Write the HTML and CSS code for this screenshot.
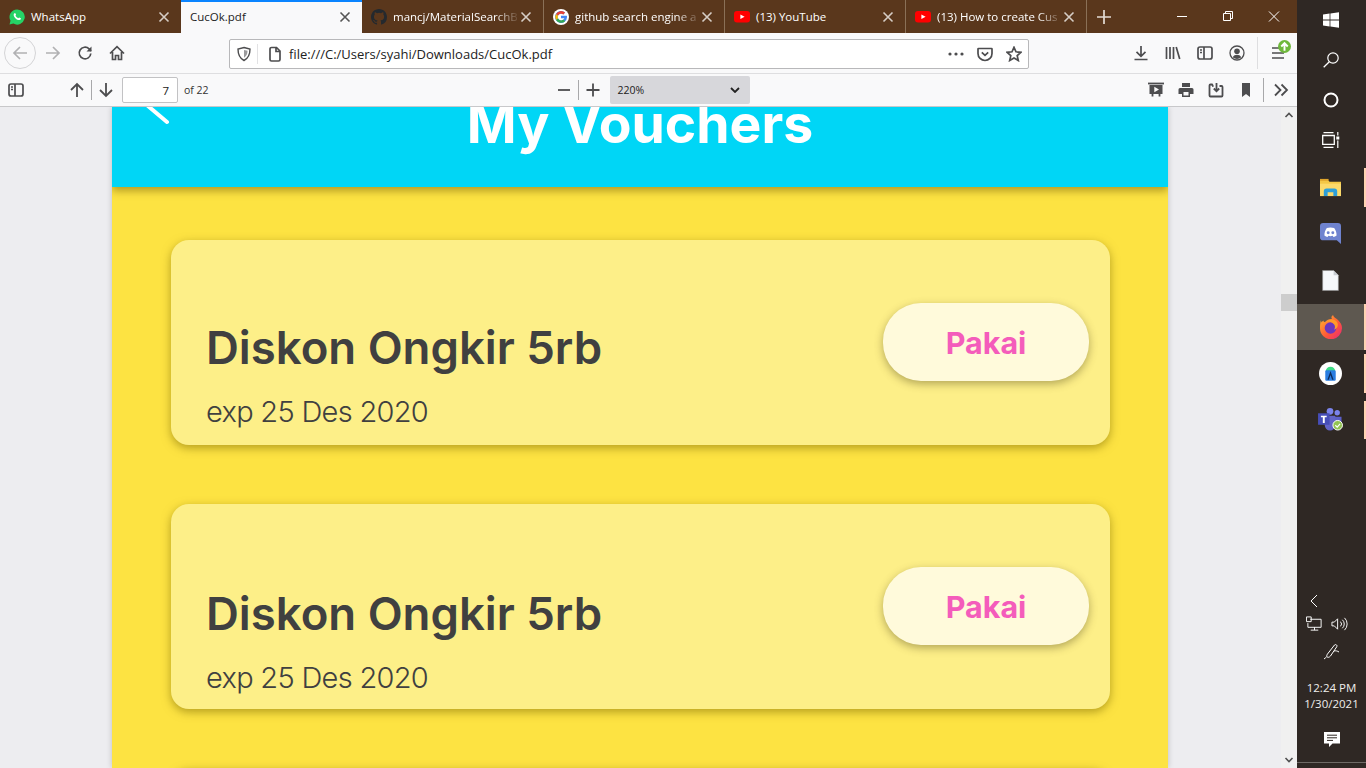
FILE: index.html
```html
<!DOCTYPE html>
<html lang="en">

<head>
    <meta charset="UTF-8" />
    <title>CucOk.pdf</title>
    <link rel="stylesheet" href="styles.css">
</head>

<body>
    <svg class="defs" aria-hidden="true">
        <symbol id="i-x" viewBox="0 0 12 12"><path d="M1.5 1.5l9 9M10.5 1.5l-9 9" /></symbol>
        <symbol id="i-yt" viewBox="0 0 16 12"><rect width="16" height="11.4" rx="3" fill="#f00" /><path d="M6.4 3.4l4.2 2.3-4.2 2.3z" fill="#fff" /></symbol>
    </svg>

    <div class="browser">
        <!-- tab strip -->
        <div class="tabstrip">
            <div class="tab">
                <svg class="favicon" viewBox="0 0 16 16"><path d="M8 .4a7.6 7.6 0 0 0-6.5 11.4L.5 15.6l3.9-1A7.6 7.6 0 1 0 8 .4z" fill="#25d366" /><path d="M5.6 4.2c-.3 0-.8.4-.9 1.200-.2 1.300.7 2.800 1.900 4 1.300 1.200 2.800 1.900 4 1.600.9-.2 1.300-.9 1.300-1.500l-.1-.3-1.700-.8-.8.9c-1-.3-2.300-1.500-2.800-2.700l.6-.8-.7-1.600z" fill="#fff" /></svg>
                <span class="tab-title plain">WhatsApp</span>
                <svg class="tab-x"><use href="#i-x" /></svg>
            </div>
            <div class="tab active">
                <span class="tab-title plain">CucOk.pdf</span>
                <svg class="tab-x"><use href="#i-x" /></svg>
            </div>
            <div class="tab">
                <svg class="favicon" viewBox="0 0 16 16"><path fill="#24292e" d="M8 0C3.580 0 0 3.580 0 8c0 3.540 2.290 6.530 5.470 7.590.4.070.55-.17.55-.38v-1.490c-2.010.37-2.530-.49-2.690-.94-.09-.23-.48-.94-.82-1.130-.28-.15-.68-.52-.01-.53.63-.01 1.080.58 1.230.82.72 1.210 1.870.87 2.330.66.070-.52.28-.87.51-1.070-1.780-.2-3.640-.89-3.640-3.950 0-.87.31-1.590.82-2.150-.08-.2-.36-1.020.08-2.120 0 0 .67-.21 2.200.82a7.400 7.400 0 0 1 4 0c1.530-1.040 2.200-.82 2.200-.82.44 1.100.16 1.920.08 2.120.51.56.82 1.270.82 2.150 0 3.070-1.870 3.750-3.650 3.950.29.25.54.73.54 1.480v2.190c0 .21.15.46.55.38A8 8 0 0 0 16 8c0-4.420-3.580-8-8-8z" /></svg>
                <span class="tab-title">mancj/MaterialSearchB</span>
                <svg class="tab-x"><use href="#i-x" /></svg>
            </div>
            <div class="tab sep">
                <svg class="favicon" viewBox="0 0 16 16"><circle cx="8" cy="8" r="8" fill="#fff" /><path d="M8 6.800v2.500h3.400A3.500 3.500 0 1 1 10.300 5.400l1.800-1.800A6 6 0 1 0 14 8.200c0-.5 0-1-.1-1.400z" fill="#4285f4" /><path d="M3 5l2 1.700A3.500 3.500 0 0 1 10.300 5.400l1.800-1.800A6 6 0 0 0 3 5z" fill="#ea4335" /><path d="M3 11l2-1.700a3.500 3.500 0 0 0 5.400 1.300l1.800 1.600A6 6 0 0 1 3 11z" fill="#34a853" /><path d="M3 5l2 1.700a3.500 3.500 0 0 0 0 2.600L3 11a6 6 0 0 1 0-6z" fill="#fbbc05" /></svg>
                <span class="tab-title">github search engine a</span>
                <svg class="tab-x"><use href="#i-x" /></svg>
            </div>
            <div class="tab sep">
                <svg class="favicon"><use href="#i-yt" /></svg>
                <span class="tab-title plain">(13) YouTube</span>
                <svg class="tab-x"><use href="#i-x" /></svg>
            </div>
            <div class="tab sep">
                <svg class="favicon"><use href="#i-yt" /></svg>
                <span class="tab-title">(13) How to create Cus</span>
                <svg class="tab-x"><use href="#i-x" /></svg>
            </div>
            <div class="new-tab sep">
                <svg viewBox="0 0 14 14"><path d="M7 0v14M0 7h14" /></svg>
            </div>
            <div class="win-controls">
                <svg viewBox="0 0 46 33"><path d="M18 16.500h10" /></svg>
                <svg viewBox="0 0 46 33"><path d="M18.500 13.500h7v7h-7zM20.500 13.500v-2h7v7h-2" /></svg>
                <svg viewBox="0 0 46 33"><path d="M18 11.500l10 10M28 11.500l-10 10" /></svg>
            </div>
        </div>

        <!-- navigation bar -->
        <div class="navbar">
            <div class="back-btn">
                <svg class="ico-s faint" viewBox="0 0 16 16"><path d="M15 8H2M8 2L2 8l6 6" /></svg>
            </div>
            <button class="tool"><svg class="ico-s faint" viewBox="0 0 16 16"><path d="M1 8h13M8 2l6 6-6 6" /></svg></button>
            <button class="tool"><svg class="ico-s" viewBox="0 0 16 16"><path d="M13.800 8.500a5.800 5.800 0 1 1-1.700-4.600L14 6" /><path class="fill" d="M14.500 1.500v5h-5z" /></svg></button>
            <button class="tool"><svg class="ico-s" viewBox="0 0 16 16"><path d="M1 8.500L8 1.700l7 6.800M3.500 7v7.500h3v-4h3v4h3V7" /></svg></button>
            <div class="urlbar">
                <svg class="ico-s shield" viewBox="0 0 16 16"><path d="M8 1.500l6 1.500c0 5-1 9-6 11.500C3 12 2 8 2 3z" /><path class="shield-half" d="M8 4l3.500.8C11.400 8 10.700 10 8 11.700z" /></svg>
                <span class="url-sep"></span>
                <svg class="ico-s page-ico" viewBox="0 0 16 16"><path d="M3 3a1.500 1.500 0 0 1 1.500-1.500h5L13 5v8.500a1.500 1.500 0 0 1-1.500 1.500h-7A1.500 1.500 0 0 1 3 13.500zM9 1.500v4h4" /></svg>
                <span class="url-text">file:///C:/Users/syahi/Downloads/CucOk.pdf</span>
                <svg class="ico-s dots" viewBox="0 0 16 16"><circle class="fill" cx="2" cy="8" r="1.600" /><circle class="fill" cx="8" cy="8" r="1.600" /><circle class="fill" cx="14" cy="8" r="1.600" /></svg>
                <svg class="ico-s pocket" viewBox="0 0 16 16"><path d="M1.500 2.500h13a.5.5 0 0 1 .5.500v4.500a7 7 0 0 1-14 0V3a.5.5 0 0 1 .5-.5z" /><path d="M4.800 6.300L8 9.400l3.200-3.100" /></svg>
                <svg class="ico-s star" viewBox="0 0 16 16"><path d="M8 1.300l2 4.500 4.900.5-3.700 3.300 1.100 4.900L8 12l-4.300 2.500 1.100-4.900L1.100 6.300 6 5.800z" /></svg>
            </div>
            <button class="tool dl"><svg class="ico-s" viewBox="0 0 16 16"><path d="M8 1v10M3.500 6.800L8 11.300l4.500-4.500M1.500 14.500h13" /></svg></button>
            <button class="tool"><svg class="ico-s" viewBox="0 0 16 16"><path d="M1.500 2v12M5 2v12M8.500 2v12M11.200 2l3.500 12" /></svg></button>
            <button class="tool"><svg class="ico-s" viewBox="0 0 16 16"><rect x="1" y="2" width="14" height="12" rx="2" /><path d="M7 2v12M3 5h2M3 7.500h2" /></svg></button>
            <button class="tool"><svg class="ico-s account" viewBox="0 0 16 16"><circle cx="8" cy="8" r="7" /><circle class="fill" cx="8" cy="6.300" r="2.800" /><path class="fill" d="M3.800 12.300c1-1.800 2.400-2.500 4.200-2.500s3.200.7 4.200 2.500C11 13.600 9.500 14 8 14s-3-.4-4.200-1.700z" /></svg></button>
            <span class="nav-sep"></span>
            <button class="tool menu">
                <svg class="ico-s" viewBox="0 0 16 16"><path d="M2 3h12M2 8h12M2 13h12" /></svg>
                <svg class="badge" viewBox="0 0 12 12"><circle cx="6" cy="6" r="6" fill="#6fb83c" /><path d="M6 10V3.500M3 6l3-3 3 3" stroke="#fff" stroke-width="1.800" fill="none" /></svg>
            </button>
        </div>

        <!-- pdf toolbar -->
        <div class="pdfbar">
            <svg class="ico-s side-ico" viewBox="0 0 16 16"><rect x="1" y="2" width="14" height="12" rx="2" /><path d="M7 2v12M3 5h2M3 7.500h2" /></svg>
            <svg class="ico-m up-ico" viewBox="0 0 16 16"><path d="M8 15V2M2 8l6-6 6 6" /></svg>
            <span class="pdf-sep"></span>
            <svg class="ico-m" viewBox="0 0 16 16"><path d="M8 1v13M2 8l6 6 6-6" /></svg>
            <input class="page-input" value="7" aria-label="Page">
            <span class="page-count">of 22</span>
            <svg class="ico-m minus-ico" viewBox="0 0 16 16"><path d="M2 8h12" /></svg>
            <span class="pdf-sep"></span>
            <svg class="ico-m" viewBox="0 0 16 16"><path d="M1.500 8h13M8 1.500v13" /></svg>
            <div class="zoom-select">
                <span>220%</span>
                <svg viewBox="0 0 10 6"><path d="M1 1l4 4 4-4" /></svg>
            </div>
            <svg class="ico-m present-ico" viewBox="0 0 16 16"><path d="M0 1.500h16" /><path class="fill" d="M1.500 3h13v9h-13zM6.300 4.800v5.400L11 7.500z" fill-rule="evenodd" /><path d="M4.500 12v2.500M11.500 12v2.500" /></svg>
            <svg class="ico-m gap-30" viewBox="0 0 16 16"><path class="fill" d="M4 1h8v4H4zM2 6h12a1.500 1.500 0 0 1 1.500 1.500V12H12v3H4v-3H.5V7.500A1.500 1.500 0 0 1 2 6zm3.500 4v3.500h5V10z" fill-rule="evenodd" /></svg>
            <svg class="ico-m gap-30" viewBox="0 0 16 16"><path d="M5.500 4H5L4 2.500H2.500a1 1 0 0 0-1 1v10a1 1 0 0 0 1 1h11a1 1 0 0 0 1-1V5a1 1 0 0 0-1-1h-2M8.500 1v8M5.800 6.500l2.700 2.700 2.700-2.700" /></svg>
            <svg class="ico-m gap-30" viewBox="0 0 16 16"><path class="fill" d="M4 1h8v14l-4-3-4 3z" /></svg>
            <span class="pdf-sep end-sep"></span>
            <svg class="ico-m more-ico" viewBox="0 0 16 16"><path d="M2 2.500L7.500 8 2 13.500M8.500 2.500L14 8l-5.500 5.500" /></svg>
        </div>

        <!-- document viewer -->
        <div class="viewer">
            <div class="doc-area">
                <main class="doc-page">
                    <header class="doc-header">
                        <svg class="back-arrow" viewBox="0 0 24 18"><path d="M2-1l19 16" /></svg>
                        <h1>My Vouchers</h1>
                    </header>
                    <section class="voucher-list">
                        <article class="voucher">
                            <div class="voucher-info">
                                <h2>Diskon Ongkir 5rb</h2>
                                <p>exp 25 Des 2020</p>
                            </div>
                            <button class="use-btn">Pakai</button>
                        </article>
                        <article class="voucher">
                            <div class="voucher-info">
                                <h2>Diskon Ongkir 5rb</h2>
                                <p>exp 25 Des 2020</p>
                            </div>
                            <button class="use-btn">Pakai</button>
                        </article>
                        <article class="voucher"></article>
                    </section>
                </main>
            </div>
            <div class="scrollbar">
                <svg viewBox="0 0 16 16"><path d="M4.500 10L8 6.500l3.500 3.500" /></svg>
                <div class="thumb"></div>
                <svg viewBox="0 0 16 16"><path d="M4.500 6L8 9.500 11.500 6" /></svg>
            </div>
        </div>
    </div>

    <!-- windows taskbar -->
    <aside class="taskbar">
        <div class="task first">
            <svg viewBox="0 0 16 16"><path d="M0 2.400l6.600-.9v6.100H0zM7.400 1.400L16 .2v7.400H7.400zM0 8.400h6.600v6.100L0 13.600zM7.400 8.400H16v7.400l-8.600-1.200z" fill="#fff" /></svg>
        </div>
        <div class="task">
            <svg viewBox="0 0 16 16"><circle cx="10" cy="6" r="5.200" fill="none" stroke="#fff" stroke-width="1.200" /><path d="M6.300 9.700L.7 15.300" stroke="#fff" stroke-width="1.300" /></svg>
        </div>
        <div class="task">
            <svg viewBox="0 0 16 16"><circle cx="8" cy="8" r="6.500" fill="none" stroke="#fff" stroke-width="2" /></svg>
        </div>
        <div class="task">
            <svg class="taskview" viewBox="0 0 18 16"><path d="M1.500.7h10M1.500 15.300h10M.7 3.500h11.600v8.800H.7z" fill="none" stroke="#fff" stroke-width="1.300" /><path d="M15.800 0v3.500M15.800 8.500V16" stroke="#fff" stroke-width="1.200" /><rect x="14.300" y="4.500" width="3" height="3" fill="#fff" /></svg>
        </div>
        <div class="task running wide">
            <svg class="app" viewBox="0 0 22 18"><path d="M0 1h8l2 2h12v15H0z" fill="#f3c746" /><path d="M0 0h9v2H0z" fill="#e0a52c" /><path d="M0 5h22v13H0z" fill="#fbd96a" /><path d="M4 18v-5a3 3 0 0 1 3-3h8a3 3 0 0 1 3 3v5h-4v-4H8v4z" fill="#2d9fd8" /></svg>
        </div>
        <div class="task">
            <svg class="app" viewBox="0 0 20 20"><path d="M3 0h14a3 3 0 0 1 3 3v17l-4-3.500H3a3 3 0 0 1-3-3V3a3 3 0 0 1 3-3z" fill="#6f83cf" /><path d="M6.500 4.800c2.200-.8 4.800-.8 7 0 1.600 2 2.300 4.500 2.300 7.200-1 .8-2 1.200-3 1.400l-.7-1.200c-2 .5-2.200.5-4.200 0l-.7 1.200c-1-.2-2-.6-3-1.400 0-2.700.7-5.200 2.300-7.200z" fill="#fff" /><circle cx="7.800" cy="9.200" r="1.400" fill="#6f83cf" /><circle cx="12.200" cy="9.200" r="1.400" fill="#6f83cf" /></svg>
        </div>
        <div class="task">
            <svg class="app" viewBox="0 0 16 20"><path d="M.5.500h10.500l4.500 4.500v14.500H.5z" fill="#f6f8fb" stroke="#8d8d8d" stroke-width=".6" /><path d="M11 .500V5h4.500z" fill="#c8ccd2" /></svg>
        </div>
        <div class="task running active">
            <svg class="app ff" viewBox="0 0 24 24"><defs><linearGradient id="ff" x1="0" y1="0" x2="1" y2="1"><stop offset="0" stop-color="#ffbd2e" /><stop offset=".55" stop-color="#ff5a36" /><stop offset="1" stop-color="#e8257c" /></linearGradient></defs><path d="M2 5c0 1 .3 2 .8 2.500C3 6.500 3.800 6 4.500 5.500c0 1 .6 1.500 1.500 1.600C8 4.500 11 3.600 13 4c-.9-1-.9-2.500 1-4 .5 2.500 3 3 5 5 2.500 2.500 4 5 4 8a11 11 0 0 1-22 .5C1 10 1.200 7 2 5z" fill="url(#ff)" /><circle cx="11.500" cy="13" r="5.800" fill="#6b37bf" /><path d="M7 7c3-1 7 0 8.500 3 .8 1.700.5 3.500-.5 4.800 3-1 4.500-3.600 3.500-6.800C17 4 11 3 7 7z" fill="#ff9a2a" /></svg>
        </div>
        <div class="task running">
            <svg class="app as" viewBox="0 0 22 22"><circle cx="11" cy="11" r="11" fill="#fff" /><path d="M6.500 9a4.500 4.500 0 0 1 9 0z" fill="#3ddc84" /><rect x="6" y="8" width="10" height="10" rx="1" fill="#2a7de1" /><path d="M11 8.500l-3 8.500h1.400l1.600-4.500 1.600 4.500H14z" fill="#0d2d5e" /></svg>
        </div>
        <div class="task running">
            <svg class="app teams" viewBox="0 0 26 24"><circle cx="20" cy="5" r="2.800" fill="#7b83eb" /><path d="M16 9h8.500v6a4.500 4.500 0 0 1-8.500 2z" fill="#5b5fc7" /><circle cx="12.500" cy="3.500" r="3.500" fill="#7b83eb" /><path d="M7 8h11v10a5.500 5.500 0 0 1-11 0z" fill="#6264c7" /><rect y="5.500" width="12" height="12" fill="#464eb8" /><path d="M3 8h6v1.700H7v6H5v-6H3z" fill="#fff" /><circle cx="20.500" cy="18" r="5" fill="#92c353" stroke="#fff" /><path d="M18 18l2 2 3-3.500" fill="none" stroke="#fff" stroke-width="1.200" /></svg>
        </div>

        <div class="tray">
            <svg class="tray-chevron" viewBox="0 0 10 14"><path d="M8 1L2 7l6 6" /></svg>
            <div class="tray-row">
                <svg viewBox="0 0 18 16"><path d="M4.500 3H16v8.500H2V7M9 11.500v3M5 14.500h8" /><path d="M.5.500h5v5h-5z" /></svg>
                <svg viewBox="0 0 18 16"><path d="M1 6h2.500L7 2.500v11L3.500 10H1zM10 5.500a3.500 3.500 0 0 1 0 5M12 3.500a6 6 0 0 1 0 9M14.300 1.500a9 9 0 0 1 0 13" /></svg>
            </div>
            <svg class="tray-pen" viewBox="0 0 18 18"><path d="M4.500 11L11.500 2c1-1.200 3.200.3 2.300 1.700L7.500 13c-1 1.300-2.700 1.700-3.400 1-.6-.6-.4-2 .4-3zM1 16c1-1 1.500-1 2.500-2M11 8c1.500-.5 3.500 0 5 1" /></svg>
            <div class="clock">
                <span>12:24 PM</span>
                <span>1/30/2021</span>
            </div>
            <svg class="tray-note" viewBox="0 0 16 16"><path d="M0 0h16v11.500H8.500L5 15v-3.500H0z" fill="#fff" /><path d="M3 3.200h10M3 5.800h10M3 8.400h6" stroke="#2f2823" stroke-width="1" /></svg>
        </div>
        <div class="show-desktop"></div>
    </aside>
</body>

</html>
```

FILE: styles.css
```css
* {
    box-sizing: border-box;
}

:root {
    --brown: #5a371c;
    --toolbar: #f9f9fa;
    --icon: #4d4d4f;
    --taskbar: #2f2824;
}

html,
body {
    height: 100%;
}

body {
    margin: 0;
    display: flex;
    overflow: hidden;
    font-family: "Open Sans", "Noto Sans", sans-serif;
    background: var(--taskbar);
}

.defs {
    display: none;
}

button {
    all: unset;
}

/* Browser window */
.browser {
    width: 1297px;
    height: 768px;
    display: flex;
    flex-direction: column;
    flex: none;
}

/* Tabs */
.tabstrip {
    height: 33px;
    display: flex;
    flex: none;
    background: var(--brown);
    color: #fff;
}

.tab {
    width: 181px;
    display: flex;
    align-items: center;
    padding: 0 9px;
    font-size: 11.500px;
    position: relative;
}

.tab.sep,
.new-tab.sep {
    border-left: 1px solid #8a7057;
}

.tab.active {
    background: var(--toolbar);
    color: #222;
    border-top: 2px solid #0a84ff;
    padding-bottom: 2px;
}

.favicon {
    width: 16px;
    height: 16px;
    flex: none;
    margin-right: 6px;
}

.tab-title {
    flex: 1;
    white-space: nowrap;
    -webkit-mask-image: linear-gradient(to right, #000 80%, transparent);
    mask-image: linear-gradient(to right, #000 80%, transparent);
}

.tab-title.plain {
    -webkit-mask-image: none;
    mask-image: none;
}

.tab-x {
    width: 12px;
    height: 12px;
    flex: none;
    margin: 0 2px 0 0;
    fill: none;
    stroke: #d6cdc5;
    stroke-width: 1.600;
}

.tab.active .tab-x {
    stroke: #555;
}

.new-tab {
    width: 35px;
    display: flex;
    align-items: center;
    justify-content: center;
}

.new-tab svg {
    width: 14px;
    height: 14px;
    fill: none;
    stroke: #e4dcd4;
    stroke-width: 1.700;
}

.win-controls {
    margin-left: auto;
    display: flex;
}

.win-controls svg {
    width: 46px;
    height: 33px;
    fill: none;
    stroke: #fff;
    stroke-width: 1;
}

/* Icon helpers */
.ico-s,
.ico-m {
    width: 16px;
    height: 16px;
    flex: none;
    fill: none;
    stroke: var(--icon);
    stroke-width: 1.700;
}

.ico-m {
    stroke-width: 1.800;
}

.fill {
    fill: var(--icon);
    stroke: none;
}

.faint {
    stroke: #b1b1b3;
}

/* Nav bar */
.navbar {
    height: 41px;
    flex: none;
    display: flex;
    align-items: center;
    padding-left: 4px;
    background: var(--toolbar);
    border-bottom: 1px solid #dedee0;
}

.back-btn {
    width: 32px;
    height: 32px;
    margin-right: 1px;
    border: 1px solid #d4d4d6;
    border-radius: 50%;
    display: flex;
    align-items: center;
    justify-content: center;
}

.tool {
    width: 32px;
    height: 32px;
    display: flex;
    align-items: center;
    justify-content: center;
    flex: none;
    position: relative;
}

.urlbar {
    width: 800px;
    height: 30px;
    margin-left: 96px;
    margin-top: 1px;
    background: #fff;
    border: 1px solid #b8b8ba;
    border-radius: 2px;
    display: flex;
    align-items: center;
    padding-left: 5px;
    flex: none;
}

.shield {
    margin: 0 0 0 1px;
    stroke-width: 1.400;
}

.shield-half {
    fill: #9a9a9c;
    stroke: none;
}

.url-sep {
    width: 1px;
    height: 20px;
    margin: 0 5px;
    background: #e2e2e4;
}

.page-ico {
    margin: 0 0 0 4px;
}

.url-text {
    margin-left: 6px;
    font-size: 13px;
    color: #222;
    flex: 1;
    white-space: nowrap;
}

.dots {
    stroke: none;
}

.pocket,
.star {
    margin-left: 13px;
}

.star {
    margin-right: 6px;
}

.dl {
    margin-left: 96px;
}

.account {
    stroke-width: 1.300;
}

.nav-sep {
    width: 1px;
    height: 32px;
    margin: 0 4px;
    background: #dedee0;
}

.menu .badge {
    position: absolute;
    top: 3px;
    right: 3px;
    width: 13px;
    height: 13px;
}

/* PDF toolbar */
.pdfbar {
    height: 33px;
    flex: none;
    display: flex;
    align-items: center;
    background: var(--toolbar);
    border-bottom: 1px solid #c8c8ca;
    padding-left: 8px;
}

.side-ico {
    margin-right: 45px;
}

.pdf-sep {
    width: 1px;
    height: 20px;
    margin: 0 6px;
    background: #a8a8aa;
}

.page-input {
    width: 56px;
    height: 26px;
    margin-left: 8px;
    padding: 0 8px;
    border: 1px solid #c2c2c4;
    border-radius: 2px;
    font: 11.500px "Open Sans", sans-serif;
    color: #222;
    text-align: right;
    background: #fff;
}

.page-count {
    margin-left: 6px;
    font-size: 10.500px;
    color: #333;
}

.minus-ico {
    margin-left: 347px;
}

.zoom-select {
    width: 140px;
    height: 28px;
    margin-left: 9px;
    padding: 0 10px 0 8px;
    border-radius: 2px;
    background: #d7d7db;
    display: flex;
    align-items: center;
    justify-content: space-between;
    font-size: 10.500px;
    color: #222;
}

.zoom-select svg {
    width: 10px;
    height: 6px;
    fill: none;
    stroke: #222;
    stroke-width: 1.800;
}

.present-ico {
    margin-left: 398px;
}

.gap-30 {
    margin-left: 14px;
}

.end-sep {
    height: 24px;
    margin: 0 9px;
}

/* Viewer */
.viewer {
    flex: 1;
    min-height: 0;
    display: flex;
}

.doc-area {
    flex: 1;
    overflow: hidden;
    padding-left: 112px;
    background: #ededf0;
}

.doc-page {
    width: 1056px;
    height: 100%;
    overflow: hidden;
    background: #fde342;
    box-shadow: 0 0 6px rgba(0, 0, 0, .2);
    font-family: Inter, "Liberation Sans", sans-serif;
}

.doc-header {
    position: relative;
    height: 80px;
    overflow: hidden;
    background: #00d6f6;
    display: flex;
    justify-content: center;
    align-items: flex-end;
    box-shadow: 0 4px 8px rgba(90, 70, 0, .45);
}

.doc-header h1 {
    margin: 0 0 37px 0;
    font-size: 53.500px;
    line-height: 1;
    font-weight: 700;
    color: #fff;
}

.back-arrow {
    position: absolute;
    left: 32px;
    top: 0;
    width: 28px;
    height: 18px;
    fill: none;
    stroke: #fff;
    stroke-width: 4;
    stroke-linecap: round;
}

.voucher-list {
    display: flex;
    flex-direction: column;
    gap: 59px;
    padding: 53px 58px 0 59px;
}

.voucher {
    height: 205px;
    flex: none;
    display: flex;
    align-items: center;
    justify-content: space-between;
    padding: 0 21px 0 35px;
    background: #fdef88;
    border-radius: 18px;
    box-shadow: 0 3px 10px rgba(120, 100, 0, .55);
}

.voucher-info {
    align-self: flex-end;
    padding-bottom: 15px;
    color: #404040;
}

.voucher + .voucher .voucher-info {
    padding-bottom: 13px;
}

.voucher-info h2 {
    margin: 0;
    font-size: 45.500px;
    line-height: 56px;
    font-weight: 600;
}

.voucher-info p {
    margin: 18px 0 0;
    font-size: 29px;
    line-height: 36px;
    font-weight: 300;
    letter-spacing: -.7px;
}

.use-btn {
    width: 206px;
    height: 76px;
    margin-bottom: 2px;
    padding-top: 2px;
    border-radius: 38px;
    background: #fffadb;
    display: flex;
    align-items: center;
    justify-content: center;
    color: #f45cbb;
    font-size: 30.500px;
    font-weight: 700;
    box-shadow: 0 3px 9px rgba(90, 80, 30, .45);
}

/* Scrollbar */
.scrollbar {
    width: 16px;
    flex: none;
    display: flex;
    flex-direction: column;
    background: #f0f0f0;
    position: relative;
}

.scrollbar svg {
    width: 16px;
    height: 16px;
    fill: none;
    stroke: #505050;
    stroke-width: 1.600;
    position: absolute;
}

.scrollbar svg:first-child {
    top: 0;
}

.scrollbar svg:last-child {
    bottom: 0;
}

.thumb {
    position: absolute;
    top: 187px;
    left: 0;
    width: 16px;
    height: 17px;
    background: #cdcdcd;
}

/* Taskbar */
.taskbar {
    width: 69px;
    height: 768px;
    flex: none;
    display: flex;
    flex-direction: column;
    position: relative;
    color: #fff;
    background: var(--taskbar);
}

.task {
    height: 40px;
    flex: none;
    display: flex;
    align-items: center;
    justify-content: center;
    position: relative;
    padding-right: 2px;
}

.task svg {
    width: 16px;
    height: 16px;
}

.task svg.taskview {
    width: 18px;
}

.task svg.app {
    width: 21px;
    height: 21px;
}

.task svg.ff {
    width: 24px;
    height: 24px;
}

.task svg.as {
    width: 23px;
    height: 23px;
}

.task svg.teams {
    width: 25px;
    height: 23px;
}

.task.running {
    height: 46.500px;
}

.task.wide {
    margin-top: 4px;
}

.task:nth-child(6),
.task:nth-child(7) {
    height: 46.500px;
}

.task.running::after {
    content: "";
    position: absolute;
    right: 0;
    top: 4px;
    bottom: 4px;
    width: 2px;
    background: #ffd3b2;
}

.task.active {
    background: #5e5850;
}

.task.active::after {
    top: 0;
    bottom: 0;
}

.tray {
    margin-top: auto;
    display: flex;
    flex-direction: column;
    align-items: center;
    padding-bottom: 20px;
}

.tray svg {
    fill: none;
    stroke: #fff;
    stroke-width: 1;
}

.tray-chevron {
    width: 10px;
    height: 14px;
    align-self: flex-start;
    margin-left: 12px;
}

.tray-row {
    display: flex;
    gap: 8px;
    margin-top: 8px;
    padding-right: 10px;
}

.tray-row svg {
    width: 17px;
    height: 16px;
}

.tray-pen {
    width: 18px;
    height: 18px;
    margin-top: 11px;
    stroke-width: 1.300;
}

.clock {
    display: flex;
    flex-direction: column;
    align-items: center;
    margin-top: 19px;
    font-size: 11.500px;
    line-height: 16px;
    color: #f0eeec;
}

.tray svg.tray-note {
    width: 16px;
    height: 16px;
    margin-top: 20px;
    stroke: none;
}

.show-desktop {
    position: absolute;
    left: 0;
    right: 0;
    bottom: 5px;
    height: 1px;
    background: #6f6a66;
}
```
